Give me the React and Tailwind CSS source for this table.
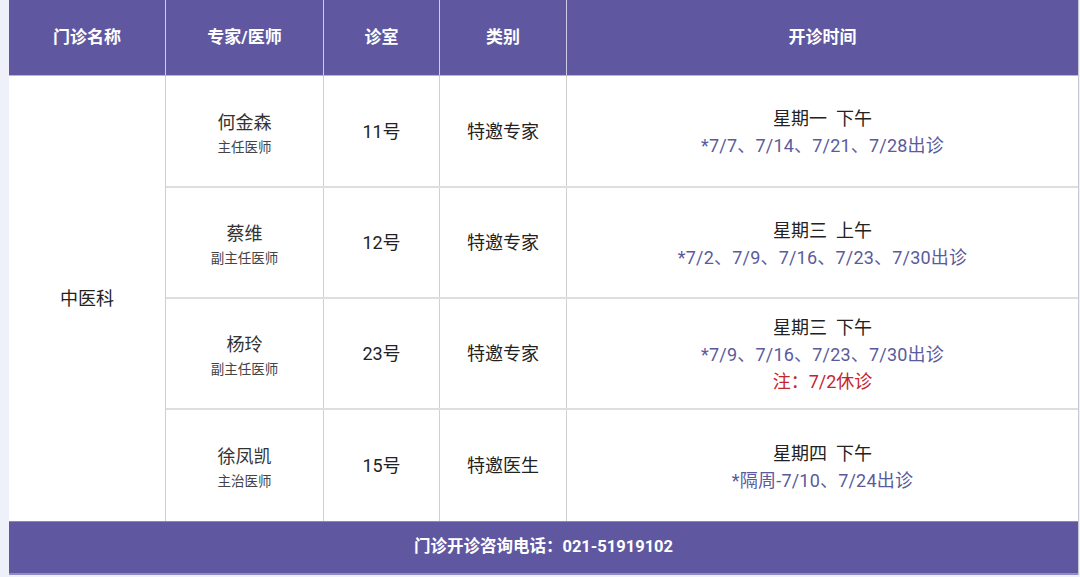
import React from 'react';

const rows = [
  {
    name: '何金森',
    title: '主任医师',
    room: '11号',
    type: '特邀专家',
    time: '星期一  下午',
    dates: '*7/7、7/14、7/21、7/28出诊',
    h: 'h-[112px]',
  },
  {
    name: '蔡维',
    title: '副主任医师',
    room: '12号',
    type: '特邀专家',
    time: '星期三  上午',
    dates: '*7/2、7/9、7/16、7/23、7/30出诊',
    h: 'h-[111px]',
  },
  {
    name: '杨玲',
    title: '副主任医师',
    room: '23号',
    type: '特邀专家',
    time: '星期三  下午',
    dates: '*7/9、7/16、7/23、7/30出诊',
    note: '注：7/2休诊',
    h: 'h-[111px]',
  },
  {
    name: '徐凤凯',
    title: '主治医师',
    room: '15号',
    type: '特邀医生',
    time: '星期四  下午',
    dates: '*隔周-7/10、7/24出诊',
    h: 'h-[111px]',
  },
];

const headers = ['门诊名称', '专家/医师', '诊室', '类别', '开诊时间'];
const widths = ['w-[157px]', 'w-[158px]', 'w-[116px]', 'w-[127px]', 'flex-1'];

export default function App() {
  return (
    <div
      className="w-full h-[577px] bg-[#eef1f9] pl-[9px] pr-[1px] overflow-hidden"
      style={{ fontFamily: 'Roboto, "Noto Sans CJK SC", "Noto Sans", sans-serif' }}
    >
      <div className="flex flex-col w-full border-r border-[#c8c8d0]">
        {/* header */}
        <div className="flex h-[76px] bg-[#5f58a1] text-white font-bold text-[17px] border-b border-[#b9b4dc]">
          {headers.map((h, i) => (
            <div
              key={h}
              className={`${widths[i]} flex items-center justify-center ${i < 4 ? 'border-r border-[#cfcbe8]' : ''}`}
            >
              {h}
            </div>
          ))}
        </div>

        {/* body */}
        <div className="flex bg-white">
          <div className="w-[157px] flex items-center justify-center text-[18px] text-[#222] border-r border-[#d0d0d0]">
            中医科
          </div>
          <div className="flex-1 flex flex-col">
            {rows.map((r, idx) => (
              <div
                key={r.name}
                className={`flex ${r.h} ${idx < rows.length - 1 ? 'border-b-2 border-[#dedede]' : ''}`}
              >
                <div className="w-[158px] flex flex-col items-center justify-center pt-[5px] border-r border-[#d0d0d0] text-[#333]">
                  <div className="text-[18px] leading-[26px]">{r.name}</div>
                  <div className="text-[13.5px] leading-[22px] text-[#444]">{r.title}</div>
                </div>
                <div className="w-[116px] flex items-center justify-center border-r border-[#d0d0d0] text-[18px] text-[#222]">
                  {r.room}
                </div>
                <div className="w-[127px] flex items-center justify-center border-r border-[#d0d0d0] text-[18px] text-[#222]">
                  {r.type}
                </div>
                <div className="flex-1 flex flex-col items-center justify-center pt-[2px] text-[18px] leading-[27px]">
                  <div className="text-[#222] whitespace-pre">{r.time}</div>
                  <div className="text-[#5b5a9c] tracking-[0.2px]">{r.dates}</div>
                  {r.note && <div className="text-[#c3262b]">{r.note}</div>}
                </div>
              </div>
            ))}
          </div>
        </div>

        {/* footer */}
        <div className="h-[54px] bg-[#5f58a1] border-t border-[#8a84c0] border-b-2 border-b-[#8f8bc4] flex items-center justify-center text-white font-bold text-[16.5px]">
          门诊开诊咨询电话：021-51919102
        </div>
      </div>
    </div>
  );
}
